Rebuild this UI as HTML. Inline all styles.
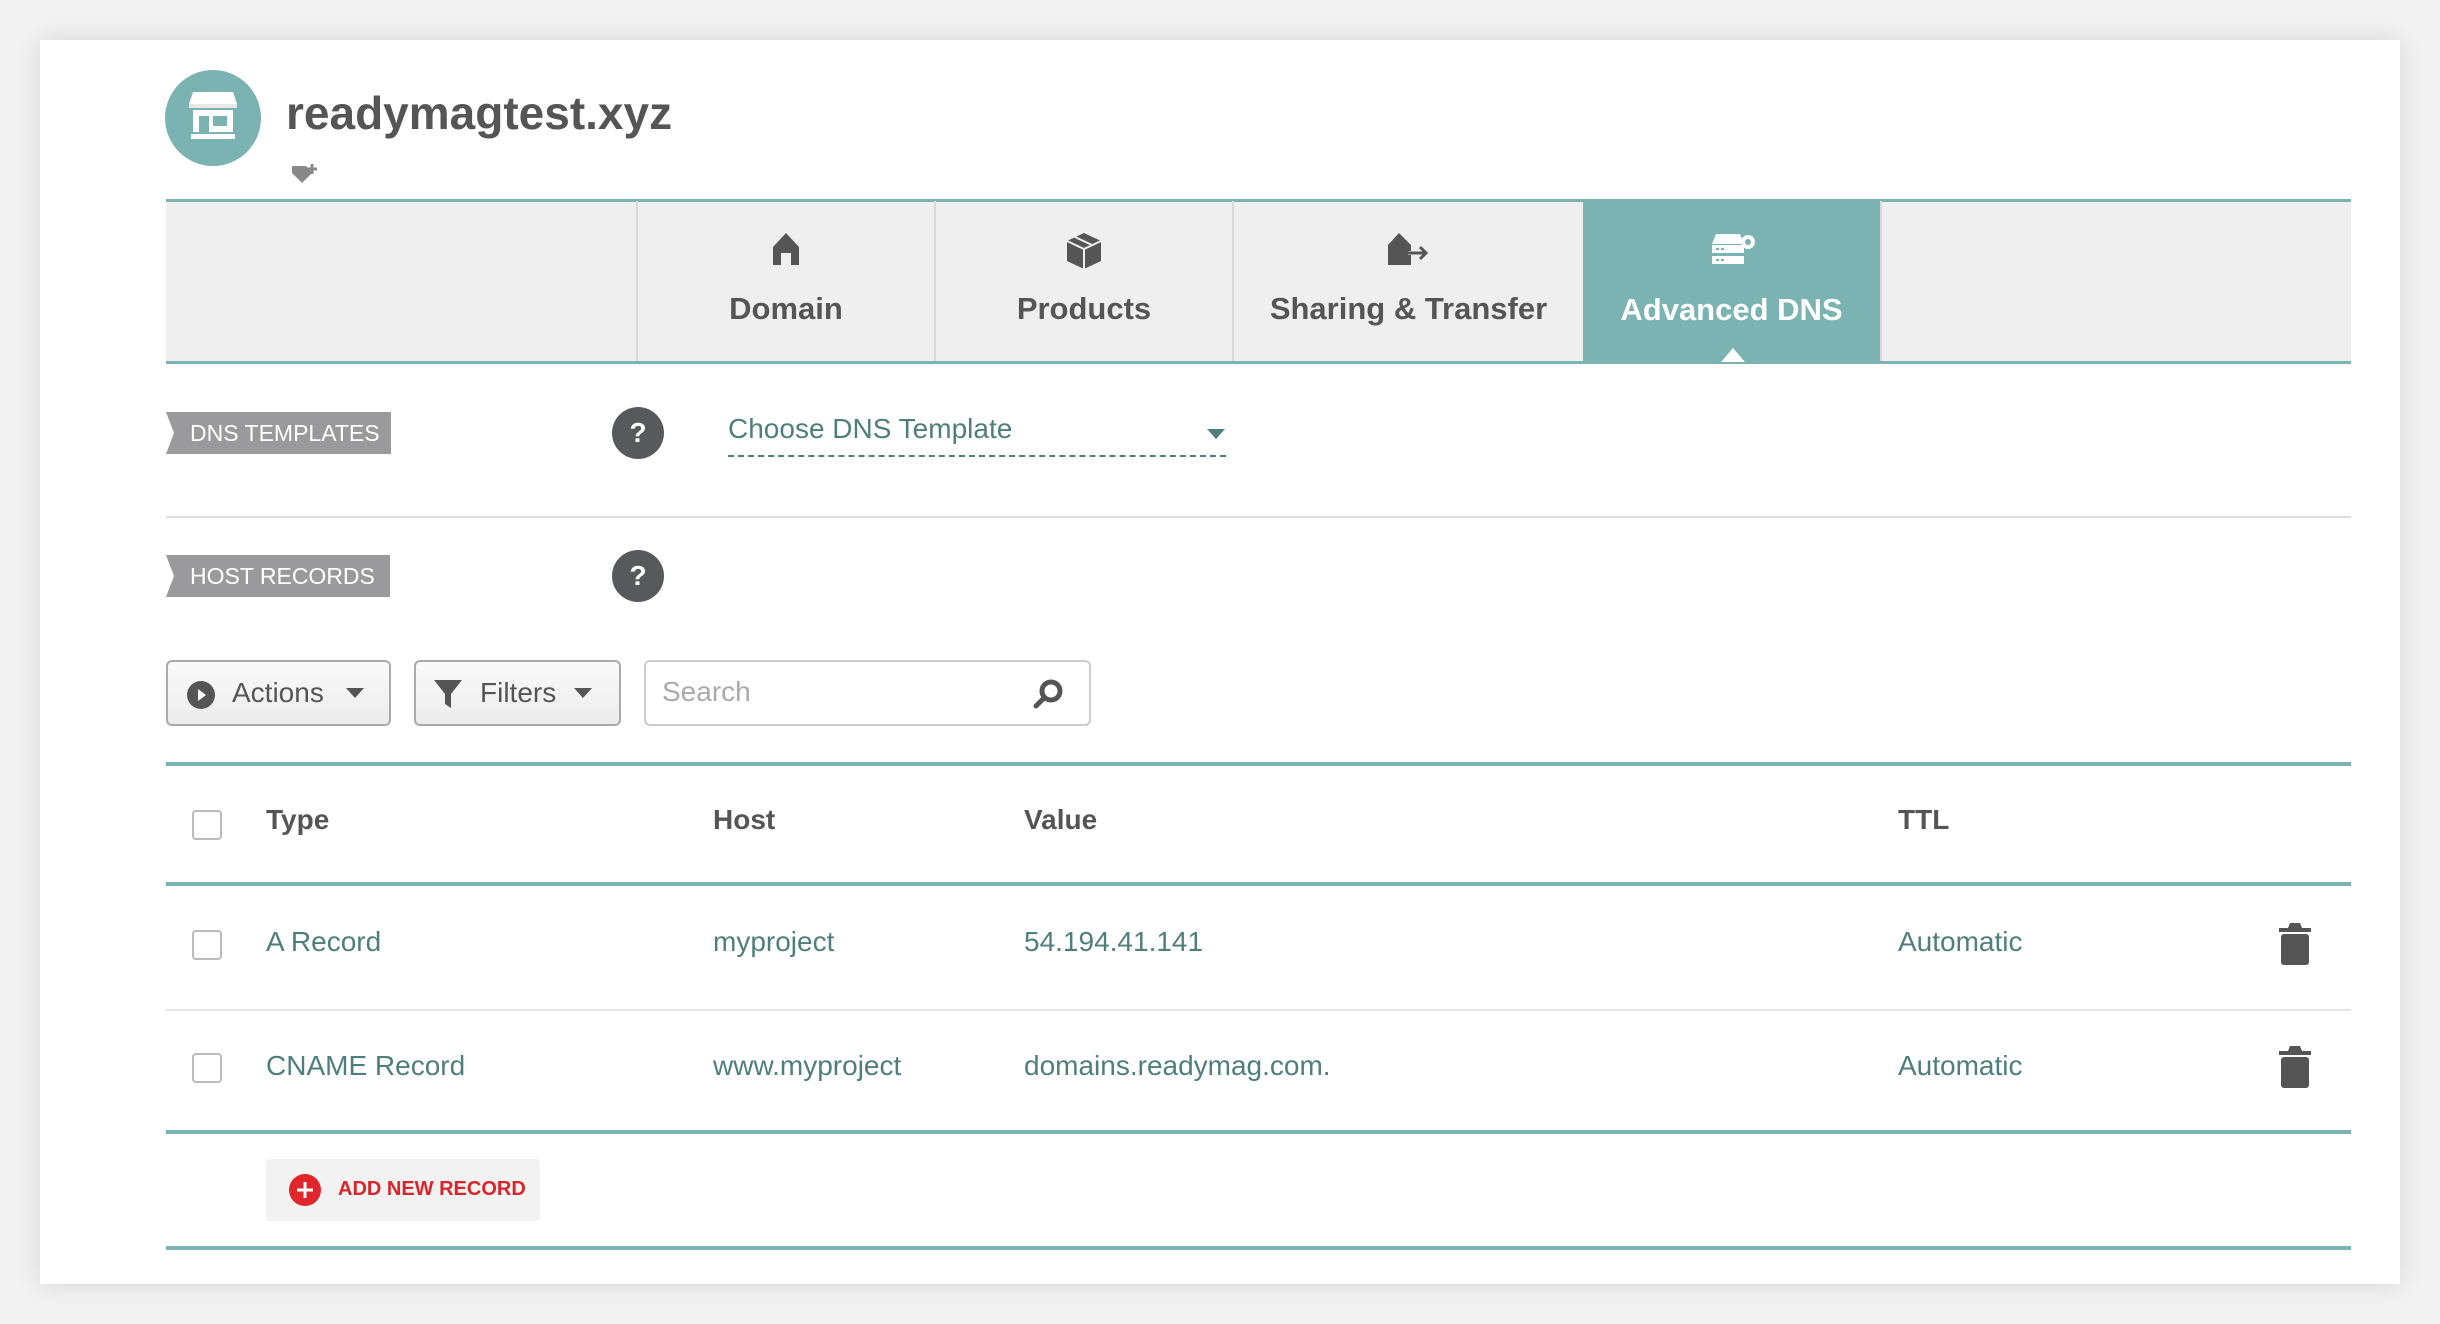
<!DOCTYPE html>
<html><head><meta charset="utf-8"><style>
*{margin:0;padding:0;box-sizing:border-box}
body{width:2440px;height:1324px;background:#f2f2f2;font-family:"Liberation Sans",sans-serif;position:relative;overflow:hidden}
.card{position:absolute;left:40px;top:40px;width:2360px;height:1244px;background:#fff;box-shadow:0 0 24px rgba(0,0,0,.12)}
.a{position:absolute}
.teal{color:#4f7f7c}
.tab{position:absolute;top:201px;height:160px;border-left:2px solid #d8d8d8;text-align:center;color:#555;font-weight:bold;font-size:31px}
.tab span{position:absolute;left:0;right:0;top:90px}
.tab svg{position:absolute;top:30px;left:50%;transform:translateX(-50%)}
.lbl{position:absolute;left:166px;height:42px;background:#9a9a9c;color:#fff;font-size:23px;line-height:42px;padding-left:24px}
.lbl:before{content:"";position:absolute;left:0;top:0;border-left:8px solid #fff;border-top:21px solid transparent;border-bottom:21px solid transparent;width:0;height:0}
.q{position:absolute;width:52px;height:52px;border-radius:50%;background:#58595b;color:#fff;font-weight:bold;font-size:28px;text-align:center;line-height:52px}
.btn{position:absolute;top:660px;height:66px;border:2px solid #aaa;border-radius:6px;background:linear-gradient(#fafafa,#ececec);font-size:28px;color:#555;line-height:62px}
.cb{position:absolute;left:192px;width:30px;height:30px;border:2px solid #bbb;border-radius:4px;background:#fff}
.hl{position:absolute;left:166px;width:2185px}
.td{position:absolute;font-size:28px;color:#4f7f7c}
.th{position:absolute;font-size:28px;color:#555;font-weight:bold;top:804px}
</style></head><body>
<div class="card"></div>
<!-- avatar -->
<div class="a" style="left:165px;top:70px;width:96px;height:96px;border-radius:50%;background:#7ab3b1"></div>
<svg class="a" style="left:187px;top:88px" width="52" height="56" viewBox="0 0 52 56"><path d="M6 4h40l4 12H2z" fill="#fff"/><path d="M2 16h48v4H2z" fill="#e8e8e8"/><rect x="6" y="22" width="40" height="22" fill="#fff"/><rect x="12" y="28" width="10" height="16" fill="#7ab3b1"/><rect x="26" y="28" width="14" height="10" fill="#7ab3b1"/><rect x="4" y="46" width="44" height="5" fill="#fff"/></svg>
<div class="a" style="left:286px;top:86px;font-size:46px;font-weight:bold;color:#555">readymagtest.xyz</div>
<svg class="a" style="left:290px;top:160px" width="32" height="28" viewBox="0 0 32 28"><path d="M2 6h14l6 7-10 10L2 13z" fill="#888"/><path d="M22 4v10M17 9h10" stroke="#888" stroke-width="3"/></svg>
<!-- nav -->
<div class="a" style="left:166px;top:199px;width:2185px;height:165px;background:#efefef;border-top:3px solid #7ab3b1;border-bottom:3px solid #7ab3b1"></div>
<div class="tab" style="left:636px;width:298px"><svg width="30" height="36" viewBox="0 0 30 36"><path d="M15 2L28 16v18h-8V22h-10v12H2V16z" fill="#555"/></svg><span>Domain</span></div>
<div class="tab" style="left:934px;width:298px"><svg width="40" height="40" viewBox="0 0 40 40"><path d="M20 2l17 8v20l-17 8-17-8V10z" fill="#555"/><path d="M3 10l17 8 17-8M20 18v20M11 6l17 8" stroke="#efefef" stroke-width="2" fill="none"/></svg><span>Products</span></div>
<div class="tab" style="left:1232px;width:351px"><svg width="46" height="36" viewBox="0 0 46 36"><path d="M13 2l12 12v20H2V14z" fill="#555"/><path d="M22 22h18M34 16l6 6-6 6" stroke="#555" stroke-width="3" fill="none"/><path d="M22 20h14v4H22z" fill="#efefef"/><path d="M22 22h17" stroke="#555" stroke-width="3"/></svg><span>Sharing &amp; Transfer</span></div>
<div class="tab" style="left:1583px;width:297px;background:#7ab3b1;color:#fff;border-left:none;height:162px;top:199px;border-top:3px solid #7ab3b1"><svg width="48" height="34" viewBox="0 0 48 34"><path d="M8 2h24l4 10H4z" fill="#fff"/><rect x="4" y="13" width="32" height="8" fill="#fff"/><rect x="4" y="24" width="32" height="8" fill="#fff"/><circle cx="40" cy="10" r="7" fill="#fff"/><circle cx="40" cy="10" r="3" fill="#7ab3b1"/><path d="M8 17h3M13 17h3M8 28h3M13 28h3" stroke="#7ab3b1" stroke-width="2"/></svg><span>Advanced DNS</span></div>
<div class="a" style="left:1880px;top:201px;width:2px;height:160px;background:#d8d8d8"></div>
<div class="a" style="left:1721px;top:348px;width:0;height:0;border-left:12px solid transparent;border-right:12px solid transparent;border-bottom:14px solid #fff"></div>
<!-- dns templates -->
<div class="lbl" style="top:412px;width:225px">DNS TEMPLATES</div>
<div class="q" style="left:612px;top:407px">?</div>
<div class="a teal" style="left:728px;top:413px;font-size:28px">Choose DNS Template</div>
<div class="a" style="left:728px;top:455px;width:498px;border-top:2px dashed #4f7f7c"></div>
<div class="a" style="left:1207px;top:429px;border-left:9px solid transparent;border-right:9px solid transparent;border-top:10px solid #4f7f7c"></div>
<div class="hl" style="top:516px;height:2px;background:#ddd"></div>
<!-- host records -->
<div class="lbl" style="top:555px;width:224px">HOST RECORDS</div>
<div class="q" style="left:612px;top:550px">?</div>
<div class="btn" style="left:166px;width:225px"><svg class="a" style="left:18px;top:18px" width="30" height="30" viewBox="0 0 30 30"><circle cx="15" cy="15" r="14" fill="#555"/><path d="M12 9l8 6-8 6z" fill="#fff"/></svg><span class="a" style="left:64px">Actions</span><span class="a" style="left:178px;top:26px;border-left:9px solid transparent;border-right:9px solid transparent;border-top:10px solid #555"></span></div>
<div class="btn" style="left:414px;width:207px"><svg class="a" style="left:16px;top:16px" width="32" height="32" viewBox="0 0 32 32"><path d="M2 2h28L19 16v14l-6-4V16z" fill="#555"/></svg><span class="a" style="left:64px">Filters</span><span class="a" style="left:158px;top:26px;border-left:9px solid transparent;border-right:9px solid transparent;border-top:10px solid #555"></span></div>
<div class="a" style="left:644px;top:660px;width:447px;height:66px;border:2px solid #ccc;border-radius:6px;background:#fff"><span class="a" style="left:16px;top:14px;font-size:28px;color:#aaa">Search</span><svg class="a" style="left:386px;top:16px" width="32" height="32" viewBox="0 0 32 32"><circle cx="19" cy="13" r="9" fill="none" stroke="#555" stroke-width="5"/><path d="M12 20l-8 8" stroke="#555" stroke-width="5" stroke-linecap="round"/></svg></div>
<!-- table -->
<div class="hl" style="top:762px;height:4px;background:#7ab3b1"></div>
<div class="cb" style="top:810px"></div>
<div class="th" style="left:266px">Type</div><div class="th" style="left:713px">Host</div><div class="th" style="left:1024px">Value</div><div class="th" style="left:1898px">TTL</div>
<div class="hl" style="top:882px;height:4px;background:#7ab3b1"></div>
<div class="cb" style="top:930px"></div>
<div class="td" style="left:266px;top:926px">A Record</div><div class="td" style="left:713px;top:926px">myproject</div><div class="td" style="left:1024px;top:926px">54.194.41.141</div><div class="td" style="left:1898px;top:926px">Automatic</div>
<div class="hl" style="top:1009px;height:2px;background:#e5e5e5"></div>
<div class="cb" style="top:1053px"></div>
<div class="td" style="left:266px;top:1050px">CNAME Record</div><div class="td" style="left:713px;top:1050px">www.myproject</div><div class="td" style="left:1024px;top:1050px">domains.readymag.com.</div><div class="td" style="left:1898px;top:1050px">Automatic</div>
<svg class="a" style="left:2279px;top:923px" width="32" height="42" viewBox="0 0 32 42"><path d="M11 0h10l2 5h9v4H0V5h9z" fill="#555"/><rect x="2" y="11" width="28" height="31" rx="3" fill="#555"/></svg>
<svg class="a" style="left:2279px;top:1046px" width="32" height="42" viewBox="0 0 32 42"><path d="M11 0h10l2 5h9v4H0V5h9z" fill="#555"/><rect x="2" y="11" width="28" height="31" rx="3" fill="#555"/></svg>
<div class="hl" style="top:1130px;height:4px;background:#7ab3b1"></div>
<div class="a" style="left:266px;top:1159px;width:274px;height:62px;background:#f2f2f2;border-radius:4px"><svg class="a" style="left:23px;top:15px" width="32" height="32" viewBox="0 0 32 32"><circle cx="16" cy="16" r="16" fill="#e0262b"/><path d="M16 8v16M8 16h16" stroke="#fff" stroke-width="3"/></svg><span class="a" style="left:72px;top:19px;font-size:20px;font-weight:bold;color:#d9252a">ADD NEW RECORD</span></div>
<div class="hl" style="top:1246px;height:4px;background:#7ab3b1"></div>
</body></html>
